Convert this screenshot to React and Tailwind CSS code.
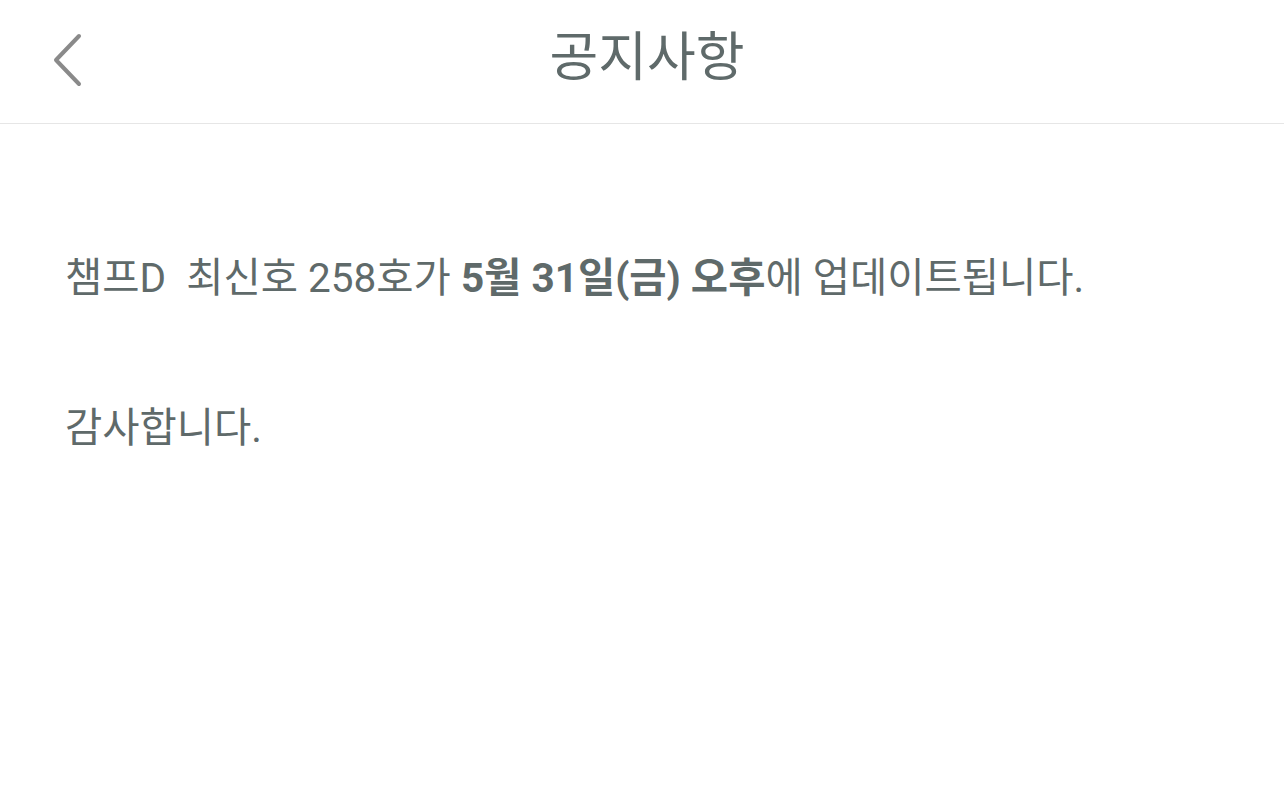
import React from 'react';

const font = { fontFamily: 'Roboto, "Noto Sans CJK KR", "Noto Sans", sans-serif' };

const App = () => {
    return (
        <div className="min-h-screen w-full bg-white text-[#5f6a6a]" style={font}>
            <header className="relative flex h-[124px] items-center justify-center border-b border-[#e6e6e6]">
                <button className="absolute left-[44px] top-[26px] flex h-[64px] w-[44px] items-center justify-center">
                    <svg width="36" height="60" viewBox="0 0 36 60" fill="none">
                        <path d="M31 8 L8 32 L31 56" stroke="#8a8a8a" strokeWidth="4" strokeLinecap="round" strokeLinejoin="round" />
                    </svg>
                </button>
                <h1 className="mb-[6px] ml-[10px] text-[53px] font-normal leading-none">
                    공지사항
                </h1>
            </header>
            <main className="px-[65px] pt-[128px]">
                <p className="text-[40.5px] leading-[52px]">
                    챔프D&nbsp; 최신호 258호가 <b className="font-bold">5월 31일(금) 오후</b>에 업데이트됩니다.
                </p>
                <p className="mt-[98px] text-[40.5px] leading-[52px]">
                    감사합니다.
                </p>
            </main>
        </div>
    );
};

export default App;
